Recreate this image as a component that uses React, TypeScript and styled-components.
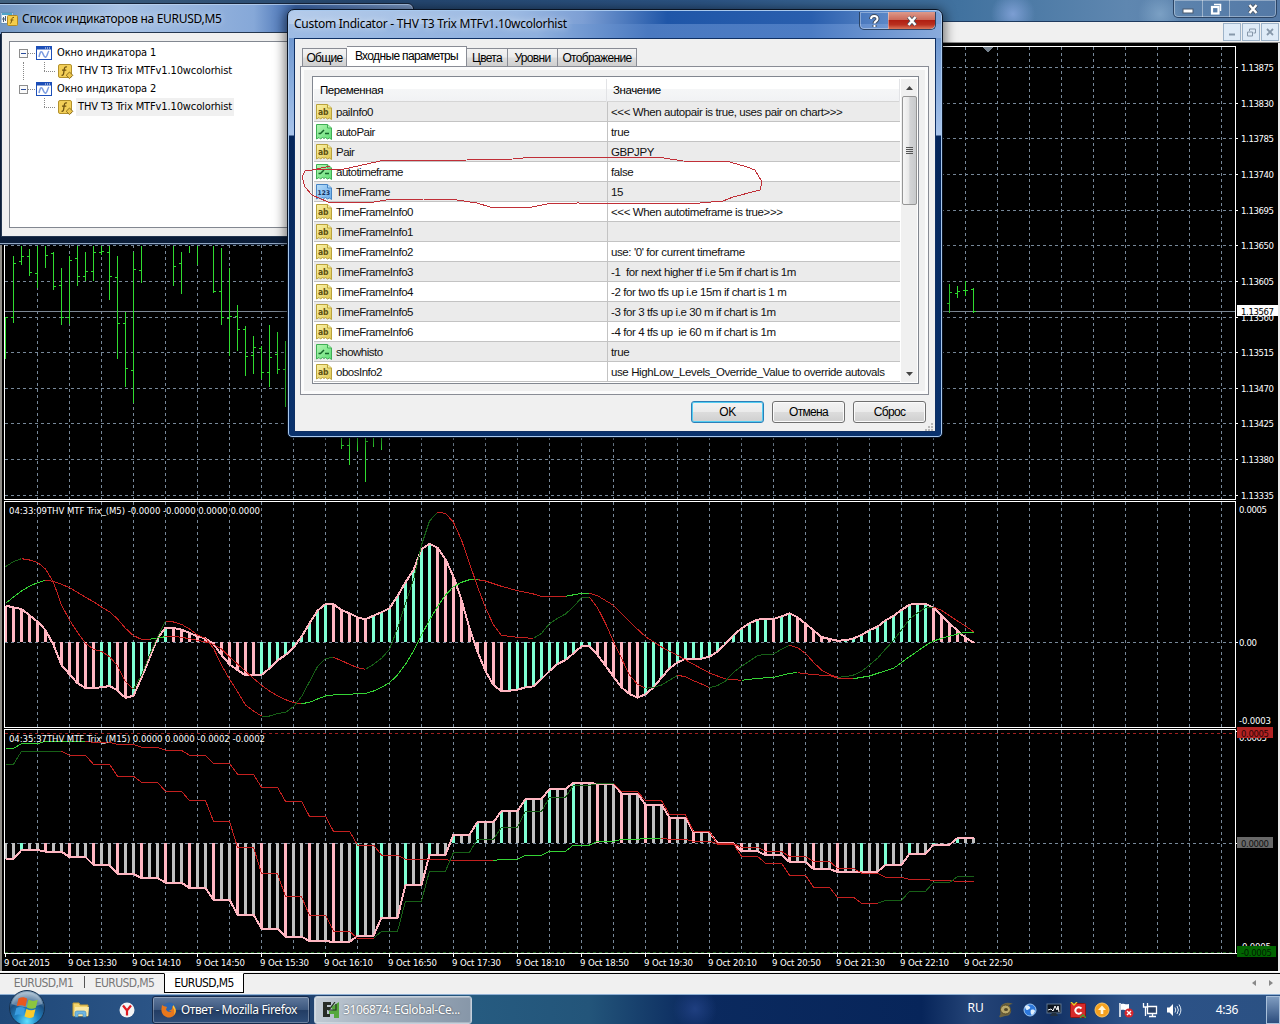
import React from 'react';
import styled, { createGlobalStyle, css } from 'styled-components';

const GlobalStyle = createGlobalStyle`
  * {
    box-sizing: border-box;
  }

  body {
    margin: 0;
    overflow: hidden;
    background: #000;
  }
`;

const tahoma = `'DejaVu Sans Condensed', 'Noto Sans', sans-serif`;
const segoe = `'Noto Sans', 'Open Sans', sans-serif`;
const sans = `'Liberation Sans', Arial, sans-serif`;

/* ---------- chart data ---------- */

// one bar every 8px, levels are kept in thirds of a pixel from the panel top
const BAR_STEP = 8;
const barX = (bar: number) => 5.5 + bar * BAR_STEP;

type Trace = { color: string; points: string };

const RED = '#c4201f';
const LIME = '#35d335';
const GREEN = '#176017';
const GRID = '#778899';
const PINK = '#ffb6c1';
const AQUA = '#7fffd4';

const trixM5 = [
  332, 337, 342, 361, 380, 405, 450, 510, 538, 565, 579, 579, 577, 573, 586, 609, 602, 548, 490, 430, 398, 399, 404,
  414, 424, 430, 447, 480, 508, 525, 541, 541, 540, 520, 496, 480, 458, 425, 385, 347, 327, 327, 345, 355, 367, 373,
  362, 352, 340, 303, 262, 225, 163, 146, 158, 193, 245, 315, 400, 470, 528, 570, 588, 587, 584, 577, 574, 552, 528,
  507, 495, 475, 454, 453, 480, 512, 545, 577, 597, 608, 598, 577, 548, 520, 502, 492, 491.5, 491, 485, 470, 447, 420,
  400, 385, 374, 372, 372, 364, 355, 367, 386, 406, 426, 432, 437, 436, 430, 420, 406, 395, 376, 363, 345, 329, 327,
  326, 338, 360, 385, 407, 428, 443,
];

const slowM5: Trace[] = [
  { color: LIME, points: '0,325 1,306 2,288 3,274 4,263 5,256' },
  {
    color: RED,
    points: '5,256 6,259 7,268 8,278 9,292 10,307 11,320 12,336 13,350 14,372 15,400 16,422 17,433 18,433',
  },
  { color: LIME, points: '18,433 19,429 20,425' },
  {
    color: RED,
    points:
      '20,425 21,424 22,427 23,431 24,436 25,441 26,448 27,462 28,486 29,507 30,529 31,550 32,571 33,588 34,602 35,614 36,623 37,626',
  },
  {
    color: LIME,
    points:
      '37,626 38,622 39,612 40,603 41,600 42,599 45,595 46,588 47,577 48,563 49,540 50,508 51,468 52,420 53,375 54,335 55,300 56,275 57,262 58,254 59,254',
  },
  { color: RED, points: '59,254 60,258 62,274 64,287 66,297 67,304 70,304' },
  { color: LIME, points: '70,304 72,295 73,295' },
  { color: RED, points: '73,295 74,302 76,331 78,380 80,425 82,456 84,481 86,508 88,534 90,552 92,556' },
  { color: LIME, points: '92,556 94,550 96,547 98,535 99,533' },
  { color: RED, points: '99,533 101,539 103,542 104,549 106,551' },
  { color: LIME, points: '106,551 108,543 109,535 111,520 113,485 115,452 116,438 117,430 119,417 120,412 121,412' },
];

const fastM5: Trace[] = [
  { color: GREEN, points: '0,215 1,200 2,191' },
  {
    color: RED,
    points: '2,191 3,195 4,202 5,222 6,262 7,330 8,375 9,412 10,445 11,463 12,469 13,485 14,512 15,560 16,583',
  },
  { color: GREEN, points: '16,583 17,540 18,480 19,425 20,378' },
  {
    color: RED,
    points: '20,378 21,381 22,388 23,402 24,420 25,430 26,460 27,510 28,552 29,590 30,630 31,648 32,663',
  },
  { color: GREEN, points: '32,663 33,663 34,656 35,652 36,635 37,605 38,560 39,515 40,491 41,487' },
  { color: RED, points: '41,487 42,497 43,508 44,518 45,523' },
  { color: GREEN, points: '45,523 46,508 47,490 48,463 49,400 50,325 51,255 52,150 53,78 54,52' },
  { color: RED, points: '54,52 55,55 56,82 57,135 58,205 59,275 60,338 61,390 62,421 64,427 66,430' },
  { color: GREEN, points: '66,430 67,415 68,386 69,370 70,357 71,335 72,308 73,307' },
  { color: RED, points: '73,307 74,338 75,385 76,440 77,490 78,540 79,568 80,580' },
  { color: GREEN, points: '80,580 81,577 82,570 83,556 84,541' },
  { color: RED, points: '84,541 85,545 86,557 87,567 88,578' },
  { color: GREEN, points: '88,578 89,572 90,558 91,532 92,514 93,498 94,482 95,478 96,477 97,463 98,451' },
  { color: RED, points: '98,451 99,458 100,475 101,502 102,525 103,538 104,547' },
  {
    color: GREEN,
    points:
      '104,547 105,545 106,540 107,529 108,510 109,490 110,462 111,437 112,405 113,372 114,354 115,338 116,336',
  },
  { color: RED, points: '116,336 117,346 118,362 119,378 120,393 121,410' },
];

// M15 values hold for three M5 bars
const trixM15 = [
  402, 375, 380, 396, 420, 447, 459, 473, 489, 524, 569, 611, 635, 648, 651, 632, 578, 480, 389, 329, 291, 258, 222,
  192, 174, 177, 206, 239, 278, 322, 354, 379, 390, 411, 432, 441, 440, 420, 386, 359, 339,
];
const slowM15 = [
  70, 56, 49, 49, 52, 58, 67, 76, 91, 115, 148, 187, 229, 274, 319, 360, 390, 403, 404, 407, 407, 403, 391, 379, 360,
  349, 343, 340, 343, 349, 356, 367, 379, 395, 409, 430, 444, 457, 463, 467, 469,
];
const fastM15 = [
  118, 79, 79, 91, 118, 154, 172, 199, 227, 289, 367, 445, 515, 571, 619, 640, 619, 528, 438, 382, 343, 307, 259, 217,
  181, 176, 200, 227, 269, 320, 357, 394, 415, 451, 487, 517, 535, 526, 499, 472, 455,
];

const expand = (groups: number[]) => Array.from({ length: 122 }, (_, bar) => groups[Math.floor((bar + 1) / 3)]);

const sliceTrace = (values: number[], from: number, to: number, color: string): Trace => ({
  color,
  points: values
    .slice(from, to + 1)
    .map((v, i) => `${from + i},${v}`)
    .join(' '),
});

const mainM15 = expand(trixM15);
const slow15 = expand(slowM15);
const fast15 = expand(fastM15);

const tracesM15: Trace[] = [
  sliceTrace(slow15, 0, 10, LIME),
  sliceTrace(slow15, 10, 61, RED),
  sliceTrace(slow15, 61, 82, LIME),
  sliceTrace(slow15, 82, 121, RED),
  sliceTrace(fast15, 0, 7, GREEN),
  sliceTrace(fast15, 7, 46, RED),
  sliceTrace(fast15, 46, 76, GREEN),
  sliceTrace(fast15, 76, 109, RED),
  sliceTrace(fast15, 109, 121, GREEN),
];

// bar, high, low, open, close
const priceBars: (number | null)[][] = [
  [0, 262, 385, null, 262],
  [1, 80, 278, 262, 100],
  [2, 48, 104, 95, 79],
  [3, 57, 137, 79, 128],
  [4, 48, 172, 129, null],
  [5, 48, 112, null, 75],
  [6, 66, 178, 69, 169],
  [7, 114, 284, 167, 262],
  [8, 80, 280, 262, 91],
  [9, 48, 166, 86, 139],
  [10, 66, 150, 139, 124],
  [11, 48, 150, 124, 67],
  [12, 48, 74, 67, 64],
  [13, 48, 207, 67, 139],
  [14, 80, 386, 142, 280],
  [15, 246, 468, 280, 416],
  [16, 66, 518, 421, 118],
  [17, 48, 157, 121, null],
  [21, 48, 165, null, 109],
  [22, 66, 190, 100, null],
  [23, 48, 68, null, null],
  [24, 48, 104, null, null],
  [26, 48, 188, null, 184],
  [27, 54, 284, 184, 263],
  [28, 114, 375, 265, 260],
  [29, 225, 360, 260, 298],
  [30, 290, 437, 298, 379],
  [31, 318, 431, 375, 352],
  [32, 348, 446, 355, 427],
  [33, 286, 470, 427, 382],
  [34, 306, 430, 373, 418],
  [35, 335, 530, 418, null],
  [42, 610, 654, null, 646],
  [43, 610, 704, 646, null],
  [44, 610, 660, null, null],
  [45, 610, 755, null, 634],
  [46, 610, 648, null, null],
  [47, 610, 657, null, null],
  [118, 162, 248, 220, 187],
  [119, 168, 202, 190, 185],
  [120, 153, 196, 181, 181],
  [121, 175, 246, 178, 244],
];

const priceLevels: [number, string][] = [
  [67, '1.13875'],
  [103, '1.13830'],
  [138, '1.13785'],
  [174, '1.13740'],
  [210, '1.13695'],
  [245, '1.13650'],
  [281, '1.13605'],
  [317, '1.13560'],
  [352, '1.13515'],
  [388, '1.13470'],
  [423, '1.13425'],
  [459, '1.13380'],
  [495, '1.13335'],
];

const timeLabels = [
  '9 Oct 2015',
  '9 Oct 13:30',
  '9 Oct 14:10',
  '9 Oct 14:50',
  '9 Oct 15:30',
  '9 Oct 16:10',
  '9 Oct 16:50',
  '9 Oct 17:30',
  '9 Oct 18:10',
  '9 Oct 18:50',
  '9 Oct 19:30',
  '9 Oct 20:10',
  '9 Oct 20:50',
  '9 Oct 21:30',
  '9 Oct 22:10',
  '9 Oct 22:50',
];

/* ---------- chart ---------- */

const ChartSvg = styled.svg`
  display: block;
  flex: none;
  background: #000;

  text {
    font-family: ${tahoma};
    font-size: 9.5px;
    fill: #fff;
  }
`;

const toPoints = (points: string, top: number) =>
  points
    .split(' ')
    .map((pair) => {
      const [bar, level] = pair.split(',').map(Number);
      return `${barX(bar)},${(top + level / 3).toFixed(2)}`;
    })
    .join(' ');

const Lines = ({ traces, top }: { traces: Trace[]; top: number }) => (
  <g fill="none" strokeWidth="1">
    {traces.map((trace, i) => (
      <polyline key={i} points={toPoints(trace.points, top)} stroke={trace.color} />
    ))}
  </g>
);

type HistogramProps = { values: number[]; top: number; zero: number; grouped?: boolean };

const Histogram = ({ values, top, zero, grouped }: HistogramProps) => (
  <g>
    {values.map((v, bar) => {
      const y = Math.round(top + v / 3);
      const rising = bar > 0 && v < values[bar - 1];
      const flat = grouped && (bar + 1) % 3 !== 0;
      return (
        <rect
          key={bar}
          x={bar === 0 ? 5 : 4 + bar * BAR_STEP}
          y={Math.min(y, zero)}
          width={bar === 0 ? 2 : 3}
          height={Math.abs(y - zero)}
          fill={flat ? '#c0c0c0' : rising ? AQUA : PINK}
        />
      );
    })}
    <polyline
      points={toPoints(values.map((v, bar) => `${bar},${v}`).join(' '), top)}
      fill="none"
      stroke={PINK}
      strokeWidth="2"
    />
  </g>
);

const PriceBars = () => (
  <g fill="#2fdc2f">
    {priceBars.map(([bar, high, low, open, close]) => {
      const x = 5 + (bar as number) * BAR_STEP;
      const y = (v: number) => Math.round(230 + v / 3 - 0.5);
      const top = y(high as number);
      return (
        <g key={bar}>
          <rect x={x} y={top} width="1" height={y(low as number) - top + 1} />
          {open !== null && <rect x={x - 2} y={y(open)} width="2" height="1" />}
          {close !== null && <rect x={x + 1} y={y(close)} width="2" height="1" />}
        </g>
      );
    })}
  </g>
);

const Chart = () => (
  <ChartSvg width="1280" height="928" viewBox="0 43 1280 928">
    <g shapeRendering="crispEdges">
      <rect x="0" y="43" width="2" height="928" fill="#8f8c86" />
      <rect x="1278" y="43" width="2" height="928" fill="#e8e8e8" />
      <g stroke={GRID} strokeDasharray="3 3">
        {Array.from({ length: 38 }, (_, i) => 37.5 + i * 32).map((x) => (
          <g key={x}>
            <line x1={x} y1="47" x2={x} y2="499" />
            <line x1={x} y1="502" x2={x} y2="727" />
            <line x1={x} y1="730" x2={x} y2="953" />
          </g>
        ))}
        {priceLevels.map(([y]) => (
          <line key={y} x1="5" y1={y + 0.5} x2="1235" y2={y + 0.5} />
        ))}
        <line x1="5" y1="642.5" x2="1235" y2="642.5" />
        <line x1="5" y1="843.5" x2="1235" y2="843.5" />
      </g>
      <line x1="5" y1="311.5" x2="1235" y2="311.5" stroke="#7b8794" />

      <PriceBars />
      <path d="M982 47h12l-6 5z" fill="#75818d" />

      <Histogram values={trixM5} top={495} zero={642} />
      <Lines traces={slowM5} top={495} />
      <Lines traces={fastM5} top={495} />

      <line x1="5" y1="733.5" x2="1235" y2="733.5" stroke="#a02020" strokeDasharray="3 3" />
      <Histogram values={mainM15} top={725} zero={843} grouped />
      <Lines traces={tracesM15} top={725} />

      <g fill="none" stroke="#fff">
        <path d="M4.500 46.500H1235.500V499.500H4.500z" />
        <path d="M4.500 501.500H1235.500V727.500H4.500z" />
        <path d="M4.500 729.500H1235.500V953.500H4.500z" />
        {priceLevels.map(([y]) => (
          <path key={y} d={`M1236 ${y + 0.5}h2`} />
        ))}
        <path d="M1236 642.500h2M1236 843.500h2M1236 731.500h2M1236 953.500h2" />
        {timeLabels.map((label, i) => (
          <path key={label} d={`M${5.5 + i * 64} 953v4`} />
        ))}
      </g>
      <line x1="5" y1="952.5" x2="1235" y2="952.5" stroke="#1c5a1c" strokeDasharray="3 3" />
    </g>

    {priceLevels.map(([y, label]) => (
      <text key={label} x="1241" y={y + 3.5} textLength="33">
        {label}
      </text>
    ))}
    <rect x="1237" y="305" width="41" height="11" fill="#fff" />
    <text x="1241" y="314.500" textLength="33" style={{ fill: '#000' }}>
      1.13567
    </text>
    <text x="1239" y="512.500" textLength="28">0.0005</text>
    <text x="1239" y="645.500" textLength="18">0.00</text>
    <text x="1239" y="723.500" textLength="32">-0.0003</text>
    <text x="1239" y="740.500" textLength="28">0.0005</text>
    <text x="1239" y="949.500" textLength="32">-0.0005</text>
    <rect x="1237" y="727" width="36" height="11" fill="#b22222" />
    <text x="1241" y="736.500" textLength="28" style={{ fill: '#2a0505' }}>0.0005</text>
    <rect x="1237" y="837" width="36" height="11" fill="#696969" />
    <text x="1241" y="846.500" textLength="28" style={{ fill: '#111' }}>0.0000</text>
    <rect x="1237" y="946" width="39" height="11" fill="#006400" />
    <text x="1241" y="955.500" textLength="31" style={{ fill: '#001a00' }}>-0.0005</text>

    <text x="9" y="514" textLength="251">04:33:09THV MTF Trix_(M5) -0.0000 -0.0000 0.0000 0.0000</text>
    <text x="9" y="742" textLength="256">04:35:37THV MTF Trix_(M15) 0.0000 0.0000 -0.0002 -0.0002</text>
    {timeLabels.map((label, i) => (
      <text key={label} x={4 + i * 64} y="966" textLength={i === 0 ? 46 : 49}>
        {label}
      </text>
    ))}
  </ChartSvg>
);

/* ---------- terminal frame ---------- */

const Desktop = styled.div`
  position: relative;
  display: flex;
  flex-direction: column;
  width: 1280px;
  height: 1024px;
  overflow: hidden;
`;

const TerminalTitle = styled.div`
  display: flex;
  justify-content: flex-end;
  flex: none;
  height: 22px;
  padding-right: 3px;
  background: radial-gradient(circle at 1013px 14px, #7c9ed3 0, transparent 22px),
    radial-gradient(circle at 1160px 14px, #7ba0c4 0, transparent 22px),
    linear-gradient(90deg, #41617f 0, #24466f 30%, #2c5484 55%, #41729f 75%, #5f87b0 88%, #5479a6 100%);
  border-bottom: 1px solid #1e3a5f;
`;

const CaptionGroup = styled.div`
  display: flex;
  height: 18px;
  border: 1px solid #2b4465;
  border-top: 0;
  border-radius: 0 0 5px 5px;
  box-shadow: inset 0 0 0 1px rgba(255, 255, 255, 0.35);
`;

const CaptionButton = styled.div<{ $width: number; $close?: boolean }>`
  display: flex;
  align-items: center;
  justify-content: center;
  width: ${(p) => p.$width}px;
  border-left: 1px solid rgba(255, 255, 255, 0.4);

  &:first-child {
    border-left: 0;
  }

  ${(p) =>
    p.$close &&
    css`
      background: linear-gradient(#dd9a8c 0, #cc6a5a 45%, #b01f12 50%, #b9301f 75%, #d9765a 100%);
      border-radius: 0 0 5px 0;
    `}
`;

const MenuStrip = styled.div`
  display: flex;
  align-items: center;
  justify-content: flex-end;
  gap: 1px;
  flex: none;
  height: 21px;
  padding-right: 1px;
  background: #f0f0f0;
  border-bottom: 1px solid #8b8b8b;
`;

const MdiButton = styled.div`
  display: flex;
  align-items: center;
  justify-content: center;
  width: 18px;
  height: 18px;
  border: 1px solid #9db3c9;
  background: #dfebf7;
`;

const ChartTabs = styled.div`
  display: flex;
  flex: none;
  height: 23px;
  padding-left: 3px;
  background: #f0f0f0;
  border-top: 1px solid #fff;
  box-shadow: inset 0 1px 0 #f0f0f0, inset 0 2px 0 #000;
`;

const ChartTab = styled.div<{ $width: number; $active?: boolean }>`
  display: flex;
  align-items: center;
  justify-content: center;
  width: ${(p) => p.$width}px;
  height: 20px;
  margin-top: 1px;
  font: 12px ${tahoma};
  letter-spacing: -0.6px;
  white-space: nowrap;
  color: ${(p) => (p.$active ? '#000' : '#777')};

  ${(p) =>
    p.$active &&
    css`
      background: #fff;
      border: 1px solid #000;
      border-top-color: #fff;
    `}
`;

const TabDivider = styled.div`
  width: 1px;
  height: 12px;
  margin-top: 4px;
  background: #555;
`;

const TabArrows = styled.div`
  display: flex;
  align-items: center;
  gap: 13px;
  margin-left: auto;
  padding-right: 7px;
`;

/* ---------- indicator list window ---------- */

const ListWindow = styled.div`
  position: absolute;
  left: -7px;
  top: 3px;
  width: 421px;
  height: 242px;
  display: flex;
  flex-direction: column;
  padding: 1px 7px 7px 7px;
  border: 1px solid #16253c;
  border-radius: 0 6px 0 0;
  background: linear-gradient(90deg, #7296c2 0, #a8c2e4 30%, #86a8d8 62%, #3c68ae 72%, #7f9cc8 100%) 0 0 / 100% 30px
      no-repeat,
    #0b1d38;
  box-shadow: inset 0 0 0 1px rgba(190, 212, 240, 0.75);
`;

const ListTitle = styled.div`
  display: flex;
  align-items: center;
  gap: 4px;
  height: 27px;
  font: 12px ${segoe};
  letter-spacing: -0.29px;
  color: #000;
  white-space: nowrap;

  span {
    text-shadow: 0 0 6px rgba(255, 255, 255, 0.7);
  }
`;

const ListClient = styled.div`
  display: flex;
  flex: 1;
  padding: 8px 8px 8px 7px;
  border: 1px solid #24364f;
  background: #f0f0f0;
`;

const Tree = styled.div`
  flex: 1;
  padding: 2px 0 0 9px;
  border: 1px solid #828790;
  background: #fff;
`;

const TreeRow = styled.div<{ $child?: boolean }>`
  display: flex;
  align-items: center;
  gap: ${(p) => (p.$child ? 0 : 1)}px;
  height: 18px;
  padding-left: ${(p) => (p.$child ? 24 : 0)}px;
`;

const TreeText = styled.span<{ $selected?: boolean; $width?: number }>`
  height: 18px;
  padding: 0 2px;
  margin-left: 2px;
  width: ${(p) => (p.$width ? `${p.$width}px` : 'auto')};
  font: 11px/18px ${tahoma};
  letter-spacing: -0.12px;
  white-space: nowrap;
  background: ${(p) => (p.$selected ? '#f0f0f0' : 'transparent')};
`;

const TreeBranch = ({ root }: { root?: boolean }) =>
  root ? (
    <svg width="16" height="18" viewBox="0 0 16 18" shapeRendering="crispEdges">
      <path d="M9 9.500h7" stroke="#888" strokeDasharray="1 1" />
      <rect x="0.5" y="5.500" width="8" height="8" fill="#fafafa" stroke="#8d8d8d" />
      <path d="M2 9.500h5" stroke="#2a4c9c" />
    </svg>
  ) : (
    <svg width="14" height="18" viewBox="0 0 14 18" shapeRendering="crispEdges">
      <path d="M1.500 0v10M1 9.500h12" fill="none" stroke="#888" strokeDasharray="1 1" />
    </svg>
  );

const WindowGlyph = () => (
  <svg width="16" height="18" viewBox="0 0 16 18">
    <rect x="0.500" y="2.500" width="15" height="13" fill="#fff" stroke="#1d4fb8" />
    <rect x="0.500" y="2.500" width="15" height="3" fill="#1d4fb8" />
    <path d="M9 4h1M11 4h1M13 4h1" stroke="#fff" />
    <path d="M3 13c1-5 2-6 3-5s2 6 4 5c1.500-1 1.500-5 3-6" fill="none" stroke="#7b9ce0" strokeWidth="1.500" />
  </svg>
);

const FunctionGlyph = () => (
  <svg width="17" height="18" viewBox="0 0 17 18">
    <rect x="1.500" y="2.500" width="13" height="13" rx="1.500" fill="#f3cf58" stroke="#b3912c" />
    <path d="M10 5c-2-.6-2.600.6-2.900 3l-.5 3.500c-.2 1.500-1 2-2 1.600M5 8.200h4.300" fill="none" stroke="#6f5312" strokeWidth="1.300" />
    <path d="M12.500 10l3.300 3.300-3.300 3.300-3.300-3.300z" fill="#ecc54c" stroke="#8e7120" />
  </svg>
);

const ListTitleGlyph = () => (
  <svg width="17" height="16" viewBox="0 0 17 16">
    <rect x="0" y="1.500" width="12" height="11" fill="#f3f7fb" stroke="#6a93b8" />
    <path d="M1 3h10" stroke="#4fa4c7" strokeWidth="2" />
    <path d="M2.500 6v5M4.500 5v5M1 8h3" stroke="#4b5f75" />
    <rect x="6.500" y="4.500" width="10" height="10" rx="1" fill="#f5cd4a" stroke="#b28a22" />
    <path d="M13 6.500c-1.500-.4-2 .5-2.200 2l-.5 2.500c-.2 1-.6 1.400-1.400 1.200M9.400 9h3" fill="none" stroke="#7a5810" />
  </svg>
);

// dotted line that joins the two root nodes
const RootLink = styled.div`
  width: 0;
  height: 18px;
  margin: 0 -5px 0 -20px;
  border-left: 1px dotted #888;
`;

const IndicatorList = () => (
  <ListWindow>
    <ListTitle>
      <ListTitleGlyph />
      <span>Список индикаторов на EURUSD,M5</span>
    </ListTitle>
    <ListClient>
      <Tree>
        {[1, 2].map((n) => (
          <React.Fragment key={n}>
            <TreeRow>
              <TreeBranch root />
              <WindowGlyph />
              <TreeText>Окно индикатора {n}</TreeText>
            </TreeRow>
            <TreeRow $child>
              {n === 1 && <RootLink />}
              {n === 1 && <svg width="24" height="1" />}
              <TreeBranch />
              <FunctionGlyph />
              <TreeText $selected={n === 2} $width={158}>
                THV T3 Trix MTFv1.10wcolorhist
              </TreeText>
            </TreeRow>
          </React.Fragment>
        ))}
      </Tree>
    </ListClient>
  </ListWindow>
);

/* ---------- parameters dialog ---------- */

const Dialog = styled.div`
  position: absolute;
  left: 287px;
  top: 9px;
  width: 656px;
  height: 429px;
  display: flex;
  flex-direction: column;
  padding: 2px 6px 5px;
  border: 1px solid #0a1424;
  border-radius: 7px 7px 5px 5px;
  background: linear-gradient(90deg, #b4cbea 0, #9bb9e2 35%, #7d9fd4 45%, #1f56a8 58%, #2a5fae 80%, #7fa4d8 100%) 0 0 /
      100% 14px no-repeat,
    linear-gradient(90deg, #9dbbe4 0, #8fb0de 38%, #4a79c0 55%, #4c7cc4 80%, #8aabdc 100%) 0 14px / 100% 14px no-repeat,
    linear-gradient(#6f97cf 28px, #8db0df 80px, #a9c4ea 125px, #05265a 126px, #0a326d 100%);
  box-shadow: inset 0 0 0 1px #a9c9ee, 0 2px 12px 2px rgba(0, 0, 0, 0.55);
`;

const DialogTitle = styled.div`
  display: flex;
  justify-content: space-between;
  height: 26px;
`;

const DialogCaption = styled.span`
  padding-top: 3px;
  font: 12px ${segoe};
  letter-spacing: -0.27px;
  text-shadow: 0 0 7px rgba(255, 255, 255, 0.9);
  white-space: nowrap;
`;

const DialogClient = styled.div`
  display: flex;
  flex-direction: column;
  flex: 1;
  padding: 7px 6px 0 5px;
  border: 1px solid #0e2f63;
  background: #f0f0f0;
`;

const TabRow = styled.div`
  display: flex;
  align-items: flex-end;
  height: 20px;
  padding-left: 2px;
`;

const Tab = styled.div<{ $width: number; $active?: boolean }>`
  width: ${(p) => p.$width}px;
  height: ${(p) => (p.$active ? 21 : 18)}px;
  margin-bottom: ${(p) => (p.$active ? -1 : 0)}px;
  border: 1px solid #898c95;
  border-bottom: 0;
  background: ${(p) => (p.$active ? '#fff' : 'linear-gradient(#f3f3f3 0, #ebebeb 48%, #dddddd 52%, #cfcfcf 100%)')};
  font: 12px/18px ${sans};
  letter-spacing: -0.65px;
  text-align: center;
  white-space: nowrap;

  & + & {
    border-left-width: ${(p) => (p.$active ? 1 : 0)}px;
  }
`;

const TabPanel = styled.div`
  display: flex;
  height: 329px;
  padding: 9px 9px 10px 11px;
  border: 1px solid #898c95;
  background: #f0f0f0;
  box-shadow: inset 0 0 0 3px #fbfbfb;
`;

const ParamList = styled.div`
  display: flex;
  flex: 1;
  padding: 2px 1px 1px;
  border: 1px solid #828790;
  background: #fff;
`;

const ParamTable = styled.div`
  flex: 1;
`;

const HeaderRow = styled.div`
  display: grid;
  grid-template-columns: 293px 1fr;
  height: 23px;
  background: linear-gradient(#fff 0, #fff 45%, #f5f6f7 46%, #f1f2f4 100%);
  border-bottom: 1px solid #d5d5d5;
  font: 11.5px/23px ${sans};
  letter-spacing: -0.4px;

  span {
    padding-left: 6px;
    border-right: 1px solid #e2e3e6;
  }
`;

const ParamRow = styled.div<{ $odd: boolean }>`
  display: grid;
  grid-template-columns: 293px 1fr;
  height: 20px;
  background: ${(p) => (p.$odd ? '#ebebeb' : '#fff')};
  border-bottom: 1px solid #c3c3c3;
  font: 11.5px/21px ${sans};
  letter-spacing: -0.4px;
  color: #111;
`;

const ParamName = styled.div`
  display: flex;
  gap: 4px;
  height: 19px;
  padding-left: 2px;
  letter-spacing: -0.5px;

  svg {
    margin-top: 2px;
  }
`;

const ParamValue = styled.div`
  height: 19px;
  padding-left: 3px;
  border-left: 1px solid #c3c3c3;
  white-space: pre;
`;

const ScrollBar = styled.div`
  display: flex;
  flex-direction: column;
  align-items: center;
  width: 16px;
  margin-left: 1px;
  background: #f0f0f0;
`;

const ScrollArrow = styled.div`
  display: flex;
  align-items: center;
  justify-content: center;
  height: 17px;
`;

const ScrollThumb = styled.div`
  display: flex;
  align-items: center;
  justify-content: center;
  width: 15px;
  height: 109px;
  border: 1px solid #959595;
  border-radius: 2px;
  background: linear-gradient(90deg, #f6f6f6 0, #e8e8e8 45%, #d3d4d6 52%, #c8cacc 100%);
  margin-bottom: auto;
`;

const ButtonRow = styled.div`
  display: flex;
  justify-content: flex-end;
  gap: 8px;
  padding: 6px 3px 0 0;
`;

const DialogButton = styled.button<{ $primary?: boolean }>`
  width: 73px;
  height: 22px;
  padding: 0;
  border: 1px solid ${(p) => (p.$primary ? '#2c7fb8' : '#707070')};
  border-radius: 3px;
  background: linear-gradient(#f3f3f3 0, #ebebeb 48%, #dcdcdc 52%, #cfcfcf 100%);
  box-shadow: inset 0 0 0 1px ${(p) => (p.$primary ? '#54cdf2' : '#fbfbfb')};
  font: 12px ${sans};
  letter-spacing: ${(p) => (p.$primary ? -0.5 : -0.7)}px;
  color: #000;
`;

const Grip = styled.svg`
  align-self: flex-end;
  margin: 0 -4px 0 0;
`;

const Annotation = styled.svg`
  position: absolute;
  left: 300px;
  top: 154px;
  pointer-events: none;
`;

type ParamKind = 'text' | 'bool' | 'int';

const kindColors: Record<ParamKind, [string, string, string]> = {
  text: ['#fbf3a8', '#dfc654', '#b9a23c'],
  bool: ['#b4f7b4', '#5fdc74', '#3fae55'],
  int: ['#b9defa', '#6cabe8', '#4684c4'],
};

const ParamIcon = ({ kind }: { kind: ParamKind }) => {
  const [light, fill, edge] = kindColors[kind];
  return (
    <svg width="16" height="16" viewBox="0 0 16 16">
      <defs>
        <linearGradient id={`note-${kind}`} x1="0" y1="0" x2="1" y2="1">
          <stop offset="0" stopColor={light} />
          <stop offset="1" stopColor={fill} />
        </linearGradient>
      </defs>
      <path
        d="M.5.500h11l4 3.500v11.500l-2-1.500-2 1-2-1.500-1.500 1-1.500-1-2 1.500-1.500-1.500-2.500 1.500z"
        fill={`url(#note-${kind})`}
        stroke={edge}
      />
      <path d="M11.500.500v3.500h4" fill={light} stroke={edge} />
      {kind === 'bool' && <path d="M2.500 9.500h2l3.500-3.500M9 9.500h4" fill="none" stroke="#14662a" strokeWidth="1.500" />}
      {kind === 'text' && (
        <text x="2" y="11" fontFamily={tahoma} fontSize="8.500" fontWeight="bold" textLength="10" fill="#5c5010">
          ab
        </text>
      )}
      {kind === 'int' && (
        <text x="1.500" y="11" fontFamily={tahoma} fontSize="6.500" fontWeight="bold" textLength="12" fill="#12305c">
          123
        </text>
      )}
    </svg>
  );
};

const params: { kind: ParamKind; name: string; value: string }[] = [
  { kind: 'text', name: 'paiInfo0', value: '<<< When autopair is true, uses pair on chart>>>' },
  { kind: 'bool', name: 'autoPair', value: 'true' },
  { kind: 'text', name: 'Pair', value: 'GBPJPY' },
  { kind: 'bool', name: 'autotimeframe', value: 'false' },
  { kind: 'int', name: 'TimeFrame', value: '15' },
  { kind: 'text', name: 'TimeFrameInfo0', value: '<<< When autotimeframe is true>>>' },
  { kind: 'text', name: 'TimeFrameInfo1', value: '' },
  { kind: 'text', name: 'TimeFrameInfo2', value: "use: '0' for current timeframe" },
  { kind: 'text', name: 'TimeFrameInfo3', value: '-1  for next higher tf i.e 5m if chart is 1m' },
  { kind: 'text', name: 'TimeFrameInfo4', value: '-2 for two tfs up i.e 15m if chart is 1 m' },
  { kind: 'text', name: 'TimeFrameInfo5', value: '-3 for 3 tfs up i.e 30 m if chart is 1m' },
  { kind: 'text', name: 'TimeFrameInfo6', value: '-4 for 4 tfs up  ie 60 m if chart is 1m' },
  { kind: 'bool', name: 'showhisto', value: 'true' },
  { kind: 'text', name: 'obosInfo2', value: 'use HighLow_Levels_Override_Value to override autovals' },
];

const CloseCross = ({ size = 12, color = '#fff' }: { size?: number; color?: string }) => (
  <svg width={size} height={size} viewBox="0 0 12 12">
    <path d="M2.500 2l7 8M9.500 2l-7 8" stroke="#4b5563" strokeWidth="4" />
    <path d="M2.500 2l7 8M9.500 2l-7 8" stroke={color} strokeWidth="2.400" />
  </svg>
);

const IndicatorDialog = () => (
  <Dialog>
    <DialogTitle>
      <DialogCaption>Custom Indicator - THV T3 Trix MTFv1.10wcolorhist</DialogCaption>
      <CaptionGroup>
        <CaptionButton $width={28}>
          <svg width="12" height="14" viewBox="0 0 12 14">
            <path d="M3 5c0-4 6.500-4 6.500 0 0 2.200-3 2-3 4.500M6.500 11v2" fill="none" stroke="#3e4c60" strokeWidth="4" />
            <path d="M3 5c0-4 6.500-4 6.500 0 0 2.200-3 2-3 4.500M6.500 11v2" fill="none" stroke="#fff" strokeWidth="2" />
          </svg>
        </CaptionButton>
        <CaptionButton $width={47} $close>
          <CloseCross />
        </CaptionButton>
      </CaptionGroup>
    </DialogTitle>
    <DialogClient>
      <TabRow>
        <Tab $width={45}>Общие</Tab>
        <Tab $width={120} $active>
          Входные параметры
        </Tab>
        <Tab $width={41}>Цвета</Tab>
        <Tab $width={50}>Уровни</Tab>
        <Tab $width={79}>Отображение</Tab>
      </TabRow>
      <TabPanel>
        <ParamList>
          <ParamTable>
            <HeaderRow>
              <span>Переменная</span>
              <span>Значение</span>
            </HeaderRow>
            {params.map((param, i) => (
              <ParamRow key={param.name} $odd={i % 2 === 0}>
                <ParamName>
                  <ParamIcon kind={param.kind} />
                  {param.name}
                </ParamName>
                <ParamValue>{param.value}</ParamValue>
              </ParamRow>
            ))}
          </ParamTable>
          <ScrollBar>
            <ScrollArrow>
              <svg width="7" height="4" viewBox="0 0 7 4">
                <path d="M0 4l3.500-4L7 4z" fill="#444" />
              </svg>
            </ScrollArrow>
            <ScrollThumb>
              <svg width="7" height="8" viewBox="0 0 7 8" shapeRendering="crispEdges">
                <path d="M0 .5h7M0 2.500h7M0 4.500h7M0 6.500h7" stroke="#555" />
              </svg>
            </ScrollThumb>
            <ScrollArrow>
              <svg width="7" height="4" viewBox="0 0 7 4">
                <path d="M0 0l3.500 4L7 0z" fill="#444" />
              </svg>
            </ScrollArrow>
          </ScrollBar>
        </ParamList>
      </TabPanel>
      <ButtonRow>
        <DialogButton $primary>OK</DialogButton>
        <DialogButton>Отмена</DialogButton>
        <DialogButton>Сброс</DialogButton>
      </ButtonRow>
      <Grip width="8" height="8" viewBox="0 0 8 8" fill="#b8b8b8">
        <path d="M6 0h2v2H6zM3 3h2v2H3zM6 3h2v2H6zM0 6h2v2H0zM3 6h2v2H3zM6 6h2v2H6z" />
      </Grip>
    </DialogClient>
  </Dialog>
);

const RedMarker = () => (
  <Annotation width="466" height="58" viewBox="300 154 466 58">
    <polyline
      points="330,166 317,169 340,170 353,167 367,164 380,161 467,160 513,159 533,157 600,157 657,157 683,161 730,162 747,167 755,170 762,182 760,190 733,197 723,201 688,204 577,203 547,204 527,208 490,207 477,203 457,200 423,199 392,199 368,203 328,202 312,195 305,187 302,177 305,171 320,169 335,170"
      fill="none"
      stroke="#c02f37"
      shapeRendering="crispEdges"
    />
  </Annotation>
);

/* ---------- taskbar ---------- */

const Taskbar = styled.div`
  position: relative;
  display: flex;
  align-items: center;
  flex: none;
  height: 30px;
  border-top: 1px solid #8fb0d4;
  background: radial-gradient(circle at 695px 14px, #1f3f80 0, transparent 22px),
    linear-gradient(90deg, #1f4878 0, #2b5486 12%, #1d3c66 30%, #265b80 37%, #23557a 46%, #0b2a5f 54%, #07255a 72%, #254578 76%, #123063 82%, #2c5288 88%, #2b5183 100%);
`;

const StartOrb = styled.svg`
  position: absolute;
  left: 7px;
  top: -6px;
`;

const QuickLaunch = styled.div`
  display: flex;
  align-items: center;
  gap: 29px;
  width: 152px;
  padding-left: 72px;
`;

const TaskButton = styled.div<{ $active?: boolean }>`
  display: flex;
  align-items: center;
  gap: 4px;
  width: 158px;
  height: 28px;
  margin-right: 4px;
  padding-left: 8px;
  border: 1px solid ${(p) => (p.$active ? '#c4d0dc' : '#14294a')};
  border-radius: 3px;
  background: ${(p) =>
    p.$active
      ? 'linear-gradient(100deg, #c3ccd5 0, #a3b0be 40%, #8696a8 100%)'
      : 'linear-gradient(#5f789c 0, #3d587f 48%, #233d64 52%, #2f4d78 100%)'};
  box-shadow: inset 0 0 0 1px rgba(255, 255, 255, 0.3);
  font: 12px ${segoe};
  letter-spacing: -0.38px;
  color: #fff;
  white-space: nowrap;
  text-shadow: 0 0 2px rgba(0, 0, 0, 0.6);
`;

const Tray = styled.div`
  display: flex;
  align-items: center;
  gap: 8px;
  margin-left: auto;
  color: #fff;
`;

const Lang = styled.span`
  margin: -4px 6px 0 0;
  font: 12px ${segoe};
`;

const Clock = styled.span`
  margin: 0 20px 0 26px;
  font: 12px ${segoe};
  letter-spacing: -0.4px;
`;

const ShowDesktop = styled.div`
  width: 14px;
  height: 28px;
  border: 1px solid #a9c0da;
  background: linear-gradient(#7f9cc0, #2c4d7d);
`;

const WindowsTaskbar = () => (
  <Taskbar>
    <StartOrb width="40" height="38" viewBox="0 0 40 38">
      <defs>
        <radialGradient id="orb" cx="50%" cy="88%" r="80%">
          <stop offset="0" stopColor="#5fe0ff" />
          <stop offset="0.4" stopColor="#2185c5" />
          <stop offset="0.75" stopColor="#1c4f80" />
          <stop offset="1" stopColor="#86a3bc" />
        </radialGradient>
      </defs>
      <circle cx="20" cy="19" r="17.500" fill="url(#orb)" stroke="#16314f" />
      <path d="M4.500 15a16 16 0 0 1 31 0c-10 4-21 4-31 0z" fill="#fff" opacity="0.3" />
      <path d="M11.500 9.500c3-1.700 6-1.700 8.700.3l-1.800 7.900c-2.800-1.800-5.300-1.900-8.700-.4z" fill="#e8591f" />
      <path d="M21.500 10.600c3.200 1.700 6 1.700 9.300.2l-2 7.900c-3.100 1.500-5.800 1.300-9-.3z" fill="#8cc63f" />
      <path d="M9.300 19c3.400-1.600 5.800-1.400 8.700.4l-1.900 7.500c-2.800-1.700-5.200-1.900-8.600-.5z" fill="#3a9de0" />
      <path d="M19.400 20c3.100 1.700 5.800 1.800 9.100.3l-2 7.700c-3.100 1.400-5.800 1.200-9-.5z" fill="#fccb2c" />
    </StartOrb>
    <QuickLaunch>
      <svg width="18" height="17" viewBox="0 0 18 17">
        <path d="M1 2h6l1 2h8v11H1z" fill="#f2d36c" stroke="#c19c34" />
        <path d="M3 6h14l-1 9H2z" fill="#fbe9a4" />
        <path d="M3 16v-4q0-2 2-2h7q2 0 2 2v4h-3v-3H6v3z" fill="#6fb7e2" stroke="#3f86b8" strokeWidth="0.600" />
      </svg>
      <svg width="16" height="16" viewBox="0 0 16 16">
        <circle cx="8" cy="8" r="7.500" fill="#f4f4f4" />
        <path d="M4 3.500l4 5 4-5M8 8v5.500" fill="none" stroke="#e01b22" strokeWidth="2.200" />
      </svg>
    </QuickLaunch>
    <TaskButton>
      <svg width="16" height="16" viewBox="0 0 16 16">
        <circle cx="8.500" cy="7" r="6.500" fill="#2f66ad" />
        <path d="M1 3c1.500 1.500 3 1 5 2L5 7.500c1 2.500 4 3 5.500 1.500-1 .2-2 0-2.500-.8 2.500.6 4-1.700 3-4.200 2.500 1 4 3 4 5C14.600 13 11.500 15.500 8 15.500 3 15.500-.5 11 .6 6z" fill="#e8771c" />
        <path d="M12 3c3 2.500 3.500 7 1 10 1-3 .5-6-1-7z" fill="#f9c43a" />
      </svg>
      Ответ - Mozilla Firefox
    </TaskButton>
    <TaskButton $active>
      <svg width="16" height="16" viewBox="0 0 16 16">
        <path d="M0 0h8v3H4v2h3v3H4v4h3v3H0z" fill="#262b26" />
        <path d="M8 5l8-5v16h-5v-4H6V9l4-1z" fill="#56a83c" />
        <path d="M12 0l-6 8h7V2" fill="none" stroke="#253325" strokeWidth="1.200" />
      </svg>
      3106874: EGlobal-Ce...
    </TaskButton>
    <Tray>
      <Lang>RU</Lang>
      <svg width="16" height="16" viewBox="0 0 16 16">
        <path d="M3 4c3-4 8-4 12-2-3 0-4 1-4 2s3 3 2 6-3 4-6 4l-5 1.500-1-1.500c3-1 0-5 2-10z" fill="#6e6540" />
        <ellipse cx="7.500" cy="7.500" rx="5" ry="4.500" fill="#b9a86a" stroke="#504628" />
        <ellipse cx="8" cy="7.500" rx="2" ry="1.500" fill="#504628" />
      </svg>
      <svg width="16" height="16" viewBox="0 0 16 16">
        <circle cx="8" cy="8" r="6" fill="#2d78dc" stroke="#9cc7f4" />
        <path d="M3 4c3-2 4 0 5 1S6 8 5 8 3 6 3 4zM9 8c2-1 4 0 4 1s-2 4-3 4-2-4-1-5z" fill="#dfeefc" />
      </svg>
      <svg width="16" height="16" viewBox="0 0 16 16">
        <rect x="1" y="2" width="14" height="9" fill="#0d1520" stroke="#5f7690" />
        <path d="M2 8l3-1 2 2 2-5 2 4 1-4 1 6" fill="none" stroke="#fff" />
        <path d="M4 14h8l-2-3H6z" fill="#22303e" />
      </svg>
      <svg width="16" height="16" viewBox="0 0 16 16">
        <rect x="0.500" y="1.500" width="15" height="14" rx="1" fill="#d82a2a" stroke="#8c1414" />
        <path d="M11.500 6.500c-3-3-7 0-6 3 1 2.600 4.500 3 6 .8" fill="none" stroke="#fff" strokeWidth="2" />
        <path d="M1 0l3 3 3-3" fill="none" stroke="#e4cf2b" strokeWidth="1.300" />
        <path d="M10 16l3-3 3 3" fill="none" stroke="#3fa030" strokeWidth="1.300" />
      </svg>
      <svg width="16" height="16" viewBox="0 0 16 16">
        <circle cx="8" cy="8" r="7" fill="#f5a11f" stroke="#fbc562" />
        <path d="M8 3.500l4 4.500H9.300v4H6.700V8H4z" fill="#fff6d8" />
      </svg>
      <svg width="16" height="16" viewBox="0 0 16 16">
        <path d="M2 1v14" stroke="#fff" strokeWidth="1.500" />
        <path d="M3 2c3-1 4 1 8 0v6c-4 1-5-1-8 0z" fill="#fff" />
        <circle cx="11" cy="11" r="4.500" fill="#d8262c" />
        <path d="M9 9l4 4M13 9l-4 4" stroke="#fff" strokeWidth="1.400" />
      </svg>
      <svg width="16" height="16" viewBox="0 0 16 16">
        <path d="M5.500 4.500h9v7h-9zM7 14.500h7M10.500 12v2" fill="#2b4266" stroke="#fff" strokeWidth="1.300" />
        <path d="M1.500 1v4h4V1M3.500 5v9" fill="none" stroke="#fff" strokeWidth="1.300" />
      </svg>
      <svg width="16" height="16" viewBox="0 0 16 16">
        <path d="M1 5.500h2.500L7 2v12l-3.500-3.500H1z" fill="#fff" />
        <path d="M9 5.500q1.500 2.500 0 5M11 4q2.800 4 0 8M13 2.500q3.800 5.500 0 11" fill="none" stroke="#dfe9f3" />
      </svg>
      <Clock>4:36</Clock>
      <ShowDesktop />
    </Tray>
  </Taskbar>
);

const App = () => (
  <Desktop>
    <GlobalStyle />
    <TerminalTitle>
      <CaptionGroup>
        <CaptionButton $width={28}>
          <svg width="12" height="12" viewBox="0 0 12 12">
            <rect x="1" y="6" width="10" height="4" fill="#fff" stroke="#4b5a6e" />
          </svg>
        </CaptionButton>
        <CaptionButton $width={27}>
          <svg width="12" height="12" viewBox="0 0 12 12">
            <path d="M4 1.500h6.500V8" fill="none" stroke="#fff" strokeWidth="1.500" />
            <rect x="2" y="4" width="6.500" height="6.500" fill="none" stroke="#fff" strokeWidth="2.200" />
          </svg>
        </CaptionButton>
        <CaptionButton $width={47}>
          <CloseCross />
        </CaptionButton>
      </CaptionGroup>
    </TerminalTitle>
    <MenuStrip>
      <MdiButton>
        <svg width="8" height="8" viewBox="0 0 8 8">
          <path d="M1 6.500h6" stroke="#8798aa" strokeWidth="2" />
        </svg>
      </MdiButton>
      <MdiButton>
        <svg width="9" height="9" viewBox="0 0 9 9" fill="none" stroke="#8798aa">
          <path d="M2.500 3V1h6v4h-2" />
          <path d="M.5 4h5v4h-5z" />
        </svg>
      </MdiButton>
      <MdiButton>
        <svg width="8" height="8" viewBox="0 0 8 8">
          <path d="M1 1l6 6M7 1L1 7" stroke="#8798aa" strokeWidth="1.800" />
        </svg>
      </MdiButton>
    </MenuStrip>
    <Chart />
    <ChartTabs>
      <ChartTab $width={81}>EURUSD,M1</ChartTab>
      <TabDivider />
      <ChartTab $width={79}>EURUSD,M5</ChartTab>
      <ChartTab $width={80} $active>
        EURUSD,M5
      </ChartTab>
      <TabArrows>
        <svg width="4" height="6" viewBox="0 0 4 6">
          <path d="M4 0L0 3l4 3z" fill="#888" />
        </svg>
        <svg width="4" height="6" viewBox="0 0 4 6">
          <path d="M0 0l4 3-4 3z" fill="#888" />
        </svg>
      </TabArrows>
    </ChartTabs>
    <WindowsTaskbar />
    <IndicatorList />
    <IndicatorDialog />
    <RedMarker />
  </Desktop>
);

export default App;
